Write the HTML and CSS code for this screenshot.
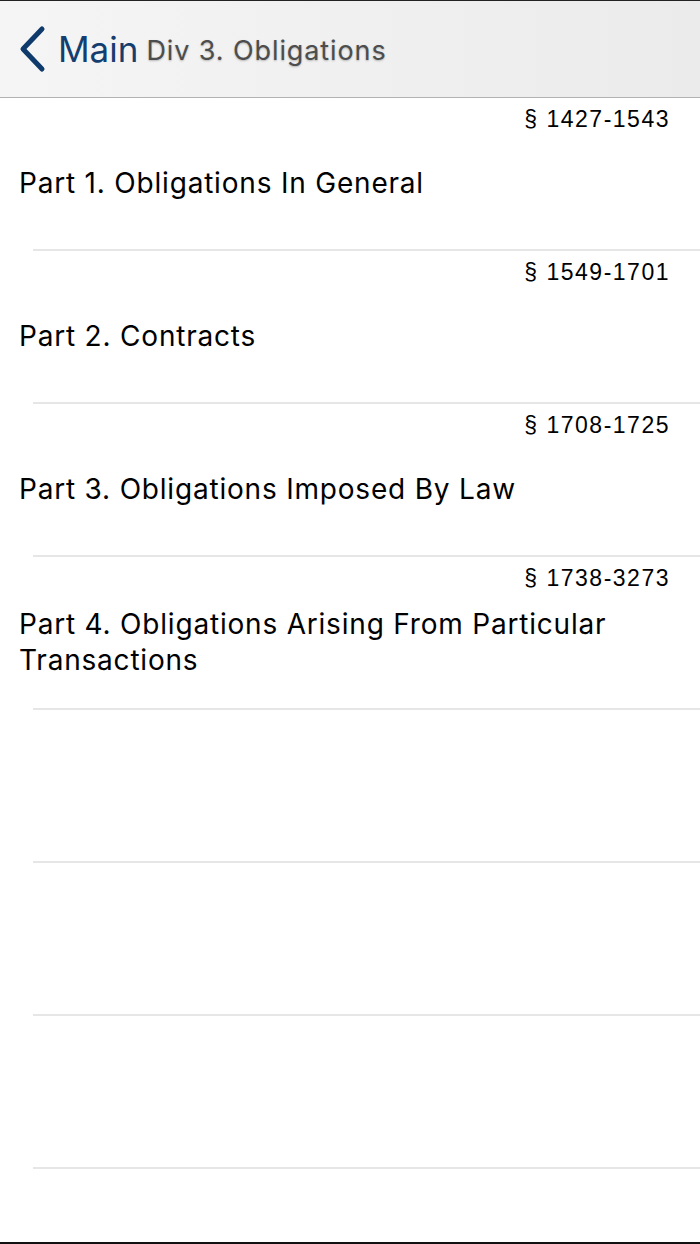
FILE: index.html
```html
<!DOCTYPE html>
<html lang="en">
<head>
    <meta charset="UTF-8">
    <meta name="viewport" content="width=device-width, initial-scale=1.0">
    <title>Div 3. Obligations</title>
    <link rel="stylesheet" href="styles.css">
</head>
<body>
    <header class="navbar">
        <a class="back" href="#">
            <svg class="chevron" width="28" height="48" viewBox="0 0 28 48">
                <path d="M24 4 L5 24 L24 44" fill="none" stroke="#0f3a6c" stroke-width="5" stroke-linecap="round" stroke-linejoin="round"/>
            </svg>
            <span class="back-label">Main</span>
        </a>
        <span class="nav-title">Div 3. Obligations</span>
    </header>
    <ul class="parts">
        <li class="part">
            <div class="range">&sect; 1427-1543</div>
            <div class="part-title">Part 1. Obligations In General</div>
        </li>
        <li class="part">
            <div class="range">&sect; 1549-1701</div>
            <div class="part-title">Part 2. Contracts</div>
        </li>
        <li class="part">
            <div class="range">&sect; 1708-1725</div>
            <div class="part-title">Part 3. Obligations Imposed By Law</div>
        </li>
        <li class="part">
            <div class="range">&sect; 1738-3273</div>
            <div class="part-title">Part 4. Obligations Arising From Particular Transactions</div>
        </li>
        <li class="part empty"></li>
        <li class="part empty"></li>
        <li class="part empty"></li>
    </ul>
</body>
</html>
```

FILE: styles.css
```css
html, body {
    margin: 0;
    padding: 0;
}
body {
    font-family: Inter, "Liberation Sans", Arial, sans-serif;
    background-color: #fff;
    color: #000;
    width: 700px;
    height: 1244px;
    box-sizing: border-box;
    border-top: 1px solid #222;
    border-bottom: 2px solid #111;
    overflow: hidden;
}
.navbar {
    height: 96px;
    display: flex;
    align-items: center;
    padding-left: 18px;
    background: linear-gradient(to right, #f5f5f5, #ebebeb);
    border-bottom: 1px solid #b2b2b2;
}
.back {
    display: flex;
    align-items: center;
    text-decoration: none;
    color: #143e70;
}
.chevron {
    margin-right: 12px;
}
.back-label {
    font-size: 35px;
}
.nav-title {
    margin-left: 8px;
    margin-top: 2px;
    font-size: 27px;
    letter-spacing: 0.9px;
    color: #4d4d4d;
    text-shadow: 0 1px 2px rgba(0, 0, 0, 0.25);
}
.parts {
    list-style: none;
    margin: 0;
    padding: 0;
}
.part {
    height: 152px;
    display: flex;
    flex-direction: column;
    position: relative;
}
.part::after {
    content: "";
    position: absolute;
    left: 33px;
    right: 0;
    bottom: -1px;
    height: 2px;
    background-color: #e6e6e6;
}
.part + .part {
    margin-top: 1px;
}
.range {
    height: 42px;
    line-height: 42px;
    text-align: right;
    padding-right: 30px;
    font-family: "Liberation Sans", Arial, sans-serif;
    font-size: 23px;
    letter-spacing: 1.5px;
}
.part-title {
    flex: 1;
    display: flex;
    align-items: center;
    padding: 0 60px 24px 19px;
    font-size: 28px;
    letter-spacing: 0.8px;
    line-height: 36px;
}
```
